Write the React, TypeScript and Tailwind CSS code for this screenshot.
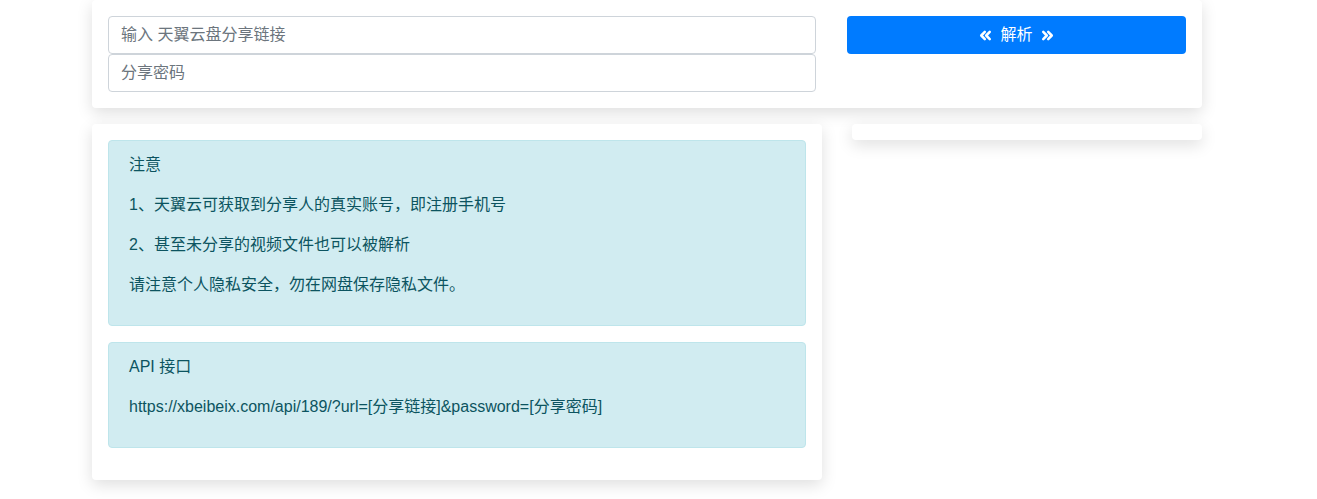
import { ChevronsLeft, ChevronsRight } from "lucide-react";

const FONT = "font-['Segoe_UI','Liberation_Sans','Noto_Sans_CJK_SC',sans-serif]";

export default function App() {
  return (
    <div className={`min-h-screen bg-white text-[16px] leading-6 text-[#212529] ${FONT}`}>
      <div className="ml-[92px] w-[1110px]">
        {/* Parse form */}
        <section className="rounded bg-white p-4 shadow-[0_5px_16px_rgba(0,0,0,0.13)]">
          <div className="flex gap-[31px]">
            <div className="flex w-[708px] flex-col">
              <input
                placeholder="输入 天翼云盘分享链接"
                className="h-[38px] w-full rounded border border-[#ced4da] px-3 text-[16px] placeholder:text-[#6c757d] outline-none"
              />
              <input
                placeholder="分享密码"
                className="h-[38px] w-full rounded border border-[#ced4da] px-3 text-[16px] placeholder:text-[#6c757d] outline-none"
              />
            </div>
            <button className="flex h-[38px] w-[339px] items-center justify-center gap-[6px] rounded bg-[#007bff] text-[16px] text-white">
              <ChevronsLeft size={17} strokeWidth={3.6} />
              <span>解析</span>
              <ChevronsRight size={17} strokeWidth={3.6} />
            </button>
          </div>
        </section>

        <div className="mt-4 flex items-start gap-[30px]">
          {/* Notes */}
          <section className="w-[730px] rounded bg-white p-4 shadow-[0_5px_16px_rgba(0,0,0,0.13)]">
            <div className="mb-4 rounded border border-[#bee5eb] bg-[#d1ecf1] px-5 py-3 text-[#0c5460]">
              <p className="mb-4">注意</p>
              <p className="mb-4">1、天翼云可获取到分享人的真实账号，即注册手机号</p>
              <p className="mb-4">2、甚至未分享的视频文件也可以被解析</p>
              <p className="mb-4">请注意个人隐私安全，勿在网盘保存隐私文件。</p>
            </div>
            <div className="mb-4 rounded border border-[#bee5eb] bg-[#d1ecf1] px-5 py-3 text-[#0c5460]">
              <p className="mb-4">API 接口</p>
              <p className="mb-4">https://xbeibeix.com/api/189/?url=[分享链接]&amp;password=[分享密码]</p>
            </div>
          </section>

          {/* Result (empty) */}
          <section className="h-4 w-[350px] rounded bg-white shadow-[0_5px_16px_rgba(0,0,0,0.13)]" />
        </div>
      </div>
    </div>
  );
}
